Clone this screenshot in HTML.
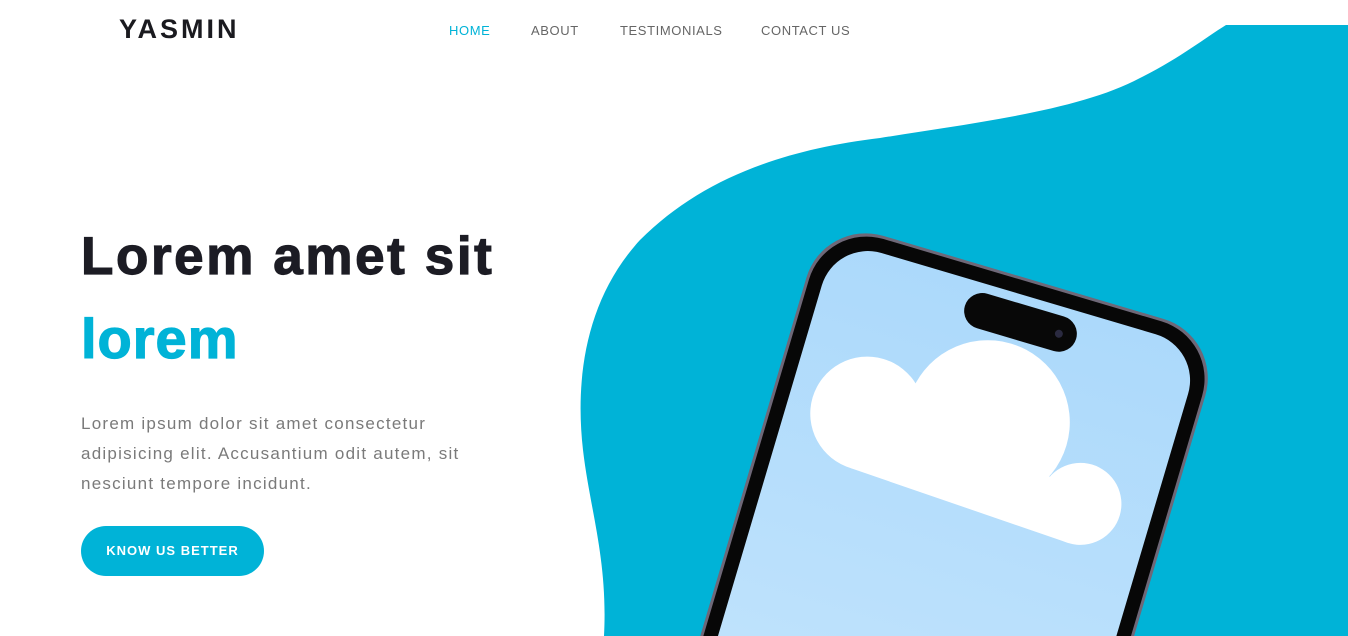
<!DOCTYPE html>
<html><head><meta charset="utf-8"><style>
*{margin:0;padding:0;box-sizing:border-box}
html,body{width:1348px;height:636px;overflow:hidden}
body{background:#fff;font-family:"Liberation Sans",sans-serif;position:relative}
svg.bg{position:absolute;left:0;top:0}
.logo{position:absolute;left:119px;top:14px;font-size:27px;font-weight:bold;letter-spacing:3px;color:#1a1a1f}
.nav{position:absolute;top:23px;font-size:13px;letter-spacing:0.6px;color:#666}
h1{position:absolute;left:81px;top:226px;font-size:53px;font-weight:bold;color:#1c1c24;letter-spacing:2.6px;white-space:nowrap;-webkit-text-stroke:1.2px #1c1c24}
h2{position:absolute;left:81px;top:306px;font-size:56px;font-weight:bold;color:#00b3d7;letter-spacing:1px;-webkit-text-stroke:1.2px #00b3d7}
p{position:absolute;left:81px;top:409px;width:420px;font-size:17px;line-height:30px;color:#7a7a7a;white-space:nowrap;letter-spacing:1.25px}
.btn{position:absolute;left:81px;top:526px;width:183px;height:50px;border-radius:25px;background:#00b3d7;color:#fff;font-size:13px;font-weight:bold;letter-spacing:1px;text-align:center;line-height:50px}
</style></head><body>
<svg class="bg" width="1348" height="636" viewBox="0 0 1348 636">
<defs><linearGradient id="sc" x1="0" y1="0" x2="0" y2="1"><stop offset="0" stop-color="#acd9fb"/><stop offset="1" stop-color="#d2ecfd"/></linearGradient></defs>
<path d="M1226,25 L1348,25 L1348,636 L604,636 C608,560 590,510 583,450 C575,380 585,300 640,240 C700,180 780,150 880,138 C980,122 1080,110 1140,78 C1180,58 1205,38 1226,25 Z" fill="#00b3d7"/>
<g transform="translate(826,222) rotate(16.5)">
<rect x="-3" y="-3" width="416" height="900" rx="62" fill="#6e6878"/>
<rect x="0" y="0" width="410" height="895" rx="60" fill="#070707"/>
<rect x="14" y="14" width="382" height="870" rx="48" fill="url(#sc)"/>
<rect x="157" y="23" width="116" height="36" rx="18" fill="#080808"/>
<circle cx="255" cy="41" r="4" fill="#2a2a40"/>
<g fill="#fff">
<circle cx="94" cy="172" r="57"/>
<circle cx="212" cy="146" r="82"/>
<circle cx="324" cy="198" r="41"/>
<polygon points="94,172 94,229 324,239 324,198 212,146"/>
</g>
</g>
</svg>
<div class="logo">YASMIN</div>
<div class="nav" style="left:449px;color:#00b3d7">HOME</div>
<div class="nav" style="left:531px">ABOUT</div>
<div class="nav" style="left:620px">TESTIMONIALS</div>
<div class="nav" style="left:761px">CONTACT US</div>
<h1>Lorem amet sit</h1>
<h2>lorem</h2>
<p>Lorem ipsum dolor sit amet consectetur<br>adipisicing elit. Accusantium odit autem, sit<br>nesciunt tempore incidunt.</p>
<div class="btn">KNOW US BETTER</div>
</body></html>
